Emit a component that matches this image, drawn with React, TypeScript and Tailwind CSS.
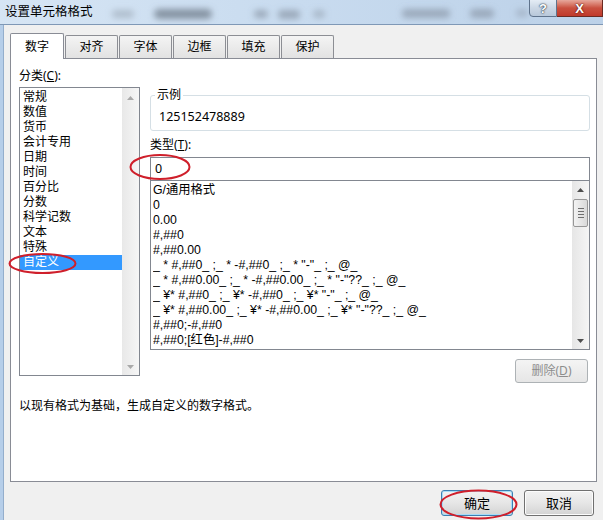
import React from "react";

function Tri({ dir, color }: { dir: "up" | "down"; color: string }) {
  return (
    <svg width="7" height="4" viewBox="0 0 7 4">
      {dir === "up" ? (
        <path d="M0 4 L3.5 0 L7 4Z" fill={color} />
      ) : (
        <path d="M0 0 L3.5 4 L7 0Z" fill={color} />
      )}
    </svg>
  );
}

const cats = ["常规", "数值", "货币", "会计专用", "日期", "时间", "百分比", "分数", "科学记数", "文本", "特殊", "自定义"];

const fmts = [
  "G/通用格式",
  "0",
  "0.00",
  "#,##0",
  "#,##0.00",
  '_ * #,##0_ ;_ * -#,##0_ ;_ * "-"_ ;_ @_',
  '_ * #,##0.00_ ;_ * -#,##0.00_ ;_ * "-"??_ ;_ @_',
  '_ ¥* #,##0_ ;_ ¥* -#,##0_ ;_ ¥* "-"_ ;_ @_',
  '_ ¥* #,##0.00_ ;_ ¥* -#,##0.00_ ;_ ¥* "-"??_ ;_ @_',
  "#,##0;-#,##0",
  "#,##0;[红色]-#,##0",
];

const tabs = ["对齐", "字体", "边框", "填充", "保护"];

export default function App() {
  return (
    <div className="relative w-[603px] h-[520px] overflow-hidden bg-[#f0f0f0] flex flex-col text-[12px] text-black font-['Noto_Sans','Noto_Sans_CJK_SC',sans-serif]">
      {/* Title bar */}
      <div className="relative h-[25px] shrink-0 flex items-start border-b border-[#7f98b6] bg-linear-to-r from-[#d6e5f4] via-[#c8dbef] to-[#bcd1e8]">
        <svg className="absolute inset-0" width="603" height="24" viewBox="0 0 603 24">
          <defs>
            <filter id="bl" x="-20%" y="-100%" width="140%" height="300%">
              <feGaussianBlur stdDeviation="3" />
            </filter>
          </defs>
          <g filter="url(#bl)">
            <rect x="112" y="10" width="22" height="8" rx="4" fill="#9aa6b4" opacity="0.6" />
            <rect x="154" y="9" width="58" height="10" rx="5" fill="#6f7b8a" opacity="0.75" />
            <rect x="254" y="10" width="14" height="8" rx="4" fill="#7d8897" opacity="0.6" />
            <rect x="278" y="10" width="22" height="9" rx="4" fill="#7d8897" opacity="0.6" />
            <rect x="313" y="10" width="12" height="8" rx="4" fill="#8a95a3" opacity="0.5" />
            <rect x="402" y="9" width="48" height="9" rx="4" fill="#7a8595" opacity="0.55" />
            <rect x="470" y="9" width="24" height="9" rx="4" fill="#7a8595" opacity="0.55" />
            <rect x="516" y="9" width="12" height="8" rx="4" fill="#8a95a3" opacity="0.45" />
          </g>
        </svg>
        <span className="relative pl-[5px] pt-[3px] text-[12.5px] leading-[17px]">设置单元格格式</span>
        <div className="relative ml-auto flex h-[18px] mt-[-1px]">
          <div className="w-[28px] h-full flex items-center justify-center border border-[#5f738c] rounded-bl-[4px] bg-linear-to-b from-[#e4ecf5] via-[#cbd7e5] to-[#b8c8da]">
            <span className="text-white font-bold text-[13px] leading-none [text-shadow:0_0_2px_#1d2b3c,0_0_1px_#1d2b3c] font-['Liberation_Sans',sans-serif]">?</span>
          </div>
          <div className="w-[46px] h-full flex items-center justify-center border border-l-0 border-[#6b2a22] bg-linear-to-b from-[#e6a89c] via-[#c9503f] to-[#c0392b]">
            <span className="text-white font-bold text-[13px] leading-none [text-shadow:0_0_2px_#5a1a12,0_0_1px_#5a1a12] font-['Liberation_Sans',sans-serif]">X</span>
          </div>
        </div>
      </div>

      {/* Body */}
      <div className="flex-1 flex min-h-0">
        <div className="w-[4px] bg-[#b6cee9] border-r border-[#94aecc]" />
        <div className="flex flex-col pl-[6px] pt-[8px]">
          {/* Tabs */}
          <div className="flex items-end h-[25px] gap-[1px]">
            <div className="relative z-10 w-[54px] h-[26px] mb-[-1px] bg-white border border-b-0 border-[#898c95] rounded-t-[2px] flex items-center justify-center leading-[16px]">
              数字
            </div>
            {tabs.map((t) => (
              <div
                key={t}
                className="w-[53px] h-[23px] border border-b-0 border-[#8c8e94] rounded-t-[2px] bg-linear-to-b from-[#f4f4f4] to-[#e2e2e2] flex items-center justify-center leading-[16px]"
              >
                {t}
              </div>
            ))}
          </div>

          {/* Panel */}
          <div className="w-[587px] h-[424px] bg-white border border-[#898c95] pt-[9px] pl-[8px] flex flex-col">
            <div className="flex">
              {/* Left column */}
              <div className="w-[121px] flex flex-col">
                <div className="h-[19px] leading-[16px]">
                  分类(<span className="underline">C</span>):
                </div>
                <div className="h-[289px] border border-[#828790] flex">
                  <div className="flex-1 pt-[2px] flex flex-col font-['Liberation_Sans','Noto_Sans_CJK_SC',sans-serif]">
                    {cats.map((c) => (
                      <div
                        key={c}
                        className={
                          c === "自定义"
                            ? "h-[15px] leading-[15px] pl-[3px] bg-[#3399ff] text-white overflow-hidden"
                            : "h-[15px] leading-[15px] pl-[3px] overflow-hidden"
                        }
                      >
                        {c}
                      </div>
                    ))}
                  </div>
                  <div className="w-[17px] flex flex-col justify-between bg-linear-to-r from-[#e8e8e8] to-[#f6f6f6]">
                    <div className="h-[17px] flex items-center justify-center pt-[2px]">
                      <Tri dir="up" color="#a9a9a9" />
                    </div>
                    <div className="h-[17px] flex items-center justify-center">
                      <Tri dir="down" color="#a9a9a9" />
                    </div>
                  </div>
                </div>
              </div>

              {/* Right column */}
              <div className="w-[440px] ml-[10px] flex flex-col">
                <fieldset className="mt-[20px] h-[43px] border border-[#d5dfe5] rounded-[3px] pl-[4px]">
                  <legend className="px-[2px] leading-[14px]">示例</legend>
                  <div className="mt-[7px] ml-[4px] leading-[16px] text-[12.5px]">125152478889</div>
                </fieldset>
                <div className="mt-[6px] h-[16px] leading-[16px]">
                  类型(<span className="underline">T</span>):
                </div>
                <div className="mt-[4px] h-[23px] border border-b-0 border-[#828790] pl-[4px] flex items-center leading-[16px] text-[12.5px]">
                  0
                </div>
                <div className="h-[170px] border border-[#828790] flex">
                  <div className="flex-1 pl-[2px] pt-[2px] flex flex-col overflow-hidden font-['Liberation_Sans','Noto_Sans_CJK_SC',sans-serif] text-[12.3px]">
                    {fmts.map((f, i) => (
                      <div key={i} className="h-[15px] leading-[15px] whitespace-pre overflow-hidden">
                        {f}
                      </div>
                    ))}
                  </div>
                  <div className="w-[17px] flex flex-col bg-linear-to-r from-[#e6e6e6] to-[#f5f5f5]">
                    <div className="h-[17px] flex items-center justify-center">
                      <Tri dir="up" color="#4d4d4d" />
                    </div>
                    <div className="mx-[1px] h-[28px] mt-[1px] border border-[#979797] rounded-[2px] bg-linear-to-r from-[#f3f3f3] to-[#d9d9d9] flex flex-col items-center justify-center gap-[2px]">
                      <div className="w-[6px] h-px bg-[#6e6e6e]" />
                      <div className="w-[6px] h-px bg-[#6e6e6e]" />
                      <div className="w-[6px] h-px bg-[#6e6e6e]" />
                      <div className="w-[6px] h-px bg-[#6e6e6e]" />
                    </div>
                    <div className="flex-1" />
                    <div className="h-[17px] flex items-center justify-center">
                      <Tri dir="down" color="#4d4d4d" />
                    </div>
                  </div>
                </div>
                <div className="mt-[9px] self-end mr-[2px] w-[73px] h-[24px] border border-[#adb2b5] rounded-[3px] bg-linear-to-b from-[#f4f4f4] to-[#e6e6e6] flex items-center justify-center text-[#8d8d8d] leading-[16px]">
                  删除(<span className="underline">D</span>)
                </div>
              </div>
            </div>
            <div className="mt-[15px] leading-[16px]">以现有格式为基础，生成自定义的数字格式。</div>
          </div>

          {/* Buttons */}
          <div className="mt-[8px] flex justify-end gap-[11px] pr-[3px]">
            <div className="w-[72px] h-[26px] border border-[#3c7fb1] rounded-[3px] shadow-[inset_0_0_0_1px_#a6dcf8] bg-linear-to-b from-[#f2f2f2] via-[#e6e6e6] to-[#d3d3d3] flex items-center justify-center leading-[16px] text-[13px]">
              确定
            </div>
            <div className="w-[70px] h-[26px] border border-[#707070] rounded-[3px] shadow-[inset_0_0_0_1px_#fcfcfc] bg-linear-to-b from-[#f2f2f2] via-[#e6e6e6] to-[#d3d3d3] flex items-center justify-center leading-[16px] text-[13px]">
              取消
            </div>
          </div>
        </div>
      </div>

      {/* Red annotation ellipses */}
      <svg className="absolute inset-0 pointer-events-none" width="603" height="520" viewBox="0 0 603 520">
        <ellipse cx="160" cy="167" rx="29.5" ry="12" fill="none" stroke="#cf1f2b" strokeWidth="2" />
        <ellipse cx="42.5" cy="263.5" rx="33" ry="9.5" fill="none" stroke="#cf1f2b" strokeWidth="2" />
        <ellipse cx="478.5" cy="504.5" rx="38" ry="14" fill="none" stroke="#cf1f2b" strokeWidth="2" />
      </svg>
    </div>
  );
}
